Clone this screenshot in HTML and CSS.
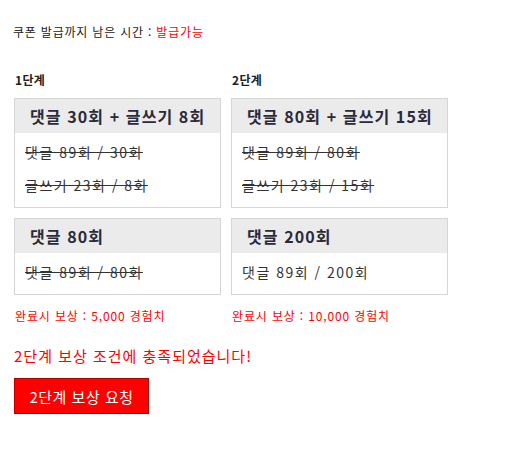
FILE: index.html
```html
<!DOCTYPE html>
<html lang="ko">
<head>
<meta charset="utf-8">
<link rel="stylesheet" href="styles.css">
</head>
<body>
<div class="page">
  <p class="timer">쿠폰 발급까지 남은 시간 : <span class="red">발급가능</span></p>
  <div class="stages">
    <div class="stage stage-1">
      <h3 class="stage-title">1단계</h3>
      <div class="mission">
        <div class="mission-head">댓글 30회 + 글쓰기 8회</div>
        <ul class="mission-body">
          <li class="done">댓글 89회 / 30회</li>
          <li class="done">글쓰기 23회 / 8회</li>
        </ul>
      </div>
      <div class="mission">
        <div class="mission-head">댓글 80회</div>
        <ul class="mission-body">
          <li class="done">댓글 89회 / 80회</li>
        </ul>
      </div>
      <p class="reward">완료시 보상 : 5,000 경험치</p>
    </div>
    <div class="stage stage-2">
      <h3 class="stage-title">2단계</h3>
      <div class="mission">
        <div class="mission-head">댓글 80회 + 글쓰기 15회</div>
        <ul class="mission-body">
          <li class="done">댓글 89회 / 80회</li>
          <li class="done">글쓰기 23회 / 15회</li>
        </ul>
      </div>
      <div class="mission">
        <div class="mission-head">댓글 200회</div>
        <ul class="mission-body">
          <li>댓글 89회 / 200회</li>
        </ul>
      </div>
      <p class="reward">완료시 보상 : 10,000 경험치</p>
    </div>
  </div>
  <p class="notice">2단계 보상 조건에 충족되었습니다!</p>
  <button class="claim" type="button">2단계 보상 요청</button>
</div>
</body>
</html>
```

FILE: styles.css
```css
* {
  box-sizing: border-box;
}

html, body {
  margin: 0;
  padding: 0;
  background: #ffffff;
}

body {
  font-family: "Noto Sans CJK KR", "Noto Sans", sans-serif;
  color: #333333;
}

.page {
  padding: 24px 0 0 13px;
}

.timer {
  margin: 0;
  font-size: 12px;
  line-height: 16px;
  letter-spacing: 0.8px;
  color: #222222;
}

.red {
  color: #ff0000;
}

.stages {
  display: grid;
  grid-template-columns: 207px 217px;
  column-gap: 10px;
  margin: 32px 0 0 1px;
  align-items: start;
}

.stage-title {
  margin: 0 0 10px 1px;
  font-size: 12px;
  line-height: 16px;
  font-weight: bold;
  letter-spacing: 0.3px;
  color: #222222;
}

.mission {
  border: 1px solid #d6d6d6;
  background: #ffffff;
}

.mission + .mission {
  margin-top: 10px;
}

.mission-head {
  height: 34px;
  line-height: 34px;
  padding-left: 15px;
  background: #ebebeb;
  font-size: 16px;
  font-weight: bold;
  letter-spacing: 1.1px;
  color: #2a2a3a;
  white-space: nowrap;
}

.mission-body {
  list-style: none;
  margin: 0;
  padding: 3px 0 5px 10px;
}

.mission-body li {
  font-size: 14px;
  line-height: 33px;
  letter-spacing: 1.5px;
  color: #333333;
  white-space: nowrap;
}

.mission-body li.done {
  text-decoration: line-through;
  text-decoration-color: #333333;
}

.reward {
  margin: 13px 0 0 1px;
  font-size: 12px;
  line-height: 16px;
  letter-spacing: 0.85px;
  color: #ff0000;
}

.notice {
  margin: 22px 0 0 1px;
  font-size: 15px;
  line-height: 20px;
  letter-spacing: 1px;
  color: #ff0000;
}

.claim {
  display: block;
  margin: 12px 0 0 1px;
  width: 135px;
  height: 36px;
  padding: 0;
  border: 1px solid #b50000;
  background: #ff0000;
  color: #ffffff;
  font-family: "Noto Sans CJK KR", "Noto Sans", sans-serif;
  font-size: 15px;
  letter-spacing: 0.5px;
  cursor: pointer;
}
```
